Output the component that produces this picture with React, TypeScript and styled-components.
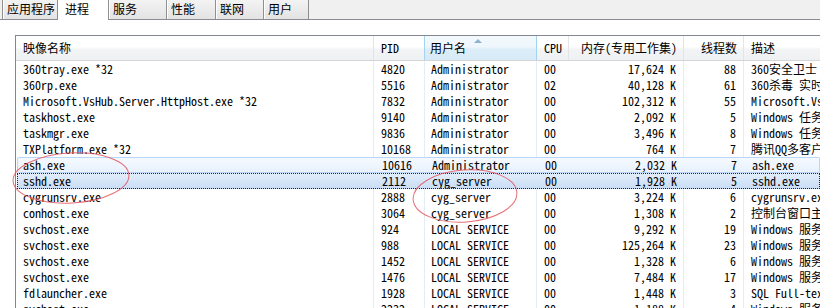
import React from "react";
import styled, { createGlobalStyle, css } from "styled-components";

const GlobalStyle = createGlobalStyle`
  html, body {
    margin: 0;
    padding: 0;
    background: #ffffff;
  }
  body {
    width: 820px;
    height: 308px;
    overflow: hidden;
    font-family: "Noto Sans Mono CJK SC", "Liberation Mono", "Noto Sans CJK SC", monospace;
    font-size: 12px;
    color: #000;
  }
`;

const Page = styled.div`
  position: relative;
  width: 820px;
  height: 308px;
  overflow: hidden;
  background: #ffffff;
`;

const TabBar = styled.div`
  display: flex;
  align-items: flex-end;
  height: 20px;
  padding-left: 2px;
  box-sizing: border-box;
  background: #f0f0f0;
  border-bottom: 1px solid #898c95;
`;

const Tab = styled.div<{ $width: number; $active?: boolean; $overlap?: boolean }>`
  width: ${(p) => p.$width}px;
  height: 19px;
  box-sizing: border-box;
  padding-left: 4px;
  line-height: 18px;
  font-family: "Noto Sans CJK SC", sans-serif;
  font-size: 12px;
  white-space: nowrap;
  margin-left: ${(p) => (p.$overlap ? "-1px" : "0")};
  ${(p) =>
    p.$active
      ? css`
          background: #ffffff;
          height: 20px;
          margin-bottom: -1px;
          padding-left: 7px;
        `
      : css`
          background: linear-gradient(#f3f3f3, #e3e3e3);
          border-left: 1px solid #8e8f8f;
          border-right: 1px solid #8e8f8f;
          box-shadow: inset 1px 0 0 #ffffff;
        `}
`;

const Content = styled.div`
  padding: 15px 0 0 15px;
`;

const List = styled.div`
  border-top: 1px solid #828790;
  border-left: 1px solid #828790;
  height: 300px;
  overflow: hidden;
`;

const COLS = "358px 51px 112px 32px 115px 60px 320px";

const Header = styled.div`
  display: grid;
  grid-template-columns: ${COLS};
  height: 25px;
  box-sizing: border-box;
  border-bottom: 1px solid #d5d5d5;
  background: linear-gradient(#ffffff 0%, #ffffff 45%, #f3f4f6 55%, #eff0f2 100%);
`;

const HeadCell = styled.div<{ $right?: boolean; $sorted?: boolean; $pad?: number }>`
  position: relative;
  line-height: 23px;
  padding: 0 ${(p) => (p.$right ? 6 : 0)}px 0 ${(p) => p.$pad ?? 7}px;
  text-align: ${(p) => (p.$right ? "right" : "left")};
  border-right: 1px solid #e3e4e6;
  white-space: nowrap;
  overflow: hidden;
  ${(p) =>
    p.$sorted &&
    css`
      background: linear-gradient(#f3f9fd 0%, #eef7fc 45%, #dcedf8 55%, #d6eaf7 100%);
      border-left: 1px solid #a4d3ef;
      border-right: 1px solid #a4d3ef;
      margin-left: -1px;
    `}
`;

const SortArrow = styled.span`
  position: absolute;
  top: 3px;
  left: 49px;
  width: 0;
  height: 0;
  border-left: 4px solid transparent;
  border-right: 4px solid transparent;
  border-bottom: 4px solid #8fb3cf;
`;

type RowState = "normal" | "hover" | "selected";

const Row = styled.div<{ $state: RowState }>`
  display: grid;
  grid-template-columns: ${COLS};
  height: 16px;
  line-height: 16px;
  ${(p) =>
    p.$state === "hover" &&
    css`
      margin-left: 1px;
      background: linear-gradient(#f6faff, #e6f0fc);
      box-shadow: inset 0 0 0 1px #b9d7fc;
      border-radius: 2px;
    `}
  ${(p) =>
    p.$state === "selected" &&
    css`
      margin-left: 1px;
      background: linear-gradient(#e2edfa, #c9ddf5);
      outline: 1px dotted #222;
      outline-offset: -1px;
    `}
`;

const Cell = styled.div<{ $right?: boolean; $line?: boolean; $pad?: number; $clear?: boolean }>`
  padding: 0 ${(p) => (p.$right ? 7 : 0)}px 0 ${(p) => p.$pad ?? 7}px;
  text-align: ${(p) => (p.$right ? "right" : "left")};
  white-space: nowrap;
  overflow: hidden;
  border-right: 1px solid ${(p) => (p.$line && !p.$clear ? "#e4ecf5" : "transparent")};
`;

const Annotation = styled.svg`
  position: absolute;
  left: 0;
  top: 0;
  pointer-events: none;
`;

type Proc = {
  name: string;
  pid: string;
  user: string;
  cpu: string;
  mem: string;
  threads: string;
  desc: string;
  state?: RowState;
};

const procs: Proc[] = [
  { name: "360tray.exe *32", pid: "4820", user: "Administrator", cpu: "00", mem: "17,624 K", threads: "88", desc: "360安全卫士 安全防护中心" },
  { name: "360rp.exe", pid: "5516", user: "Administrator", cpu: "02", mem: "40,128 K", threads: "61", desc: "360杀毒 实时监控" },
  { name: "Microsoft.VsHub.Server.HttpHost.exe *32", pid: "7832", user: "Administrator", cpu: "00", mem: "102,312 K", threads: "55", desc: "Microsoft.VsHub.Server.HttpHost" },
  { name: "taskhost.exe", pid: "9140", user: "Administrator", cpu: "00", mem: "2,092 K", threads: "5", desc: "Windows 任务的主机进程" },
  { name: "taskmgr.exe", pid: "9836", user: "Administrator", cpu: "00", mem: "3,496 K", threads: "8", desc: "Windows 任务管理器" },
  { name: "TXPlatform.exe *32", pid: "10168", user: "Administrator", cpu: "00", mem: "764 K", threads: "7", desc: "腾讯QQ多客户端管理服务" },
  { name: "ash.exe", pid: "10616", user: "Administrator", cpu: "00", mem: "2,032 K", threads: "7", desc: "ash.exe", state: "hover" },
  { name: "sshd.exe", pid: "2112", user: "cyg_server", cpu: "00", mem: "1,928 K", threads: "5", desc: "sshd.exe", state: "selected" },
  { name: "cygrunsrv.exe", pid: "2888", user: "cyg_server", cpu: "00", mem: "3,224 K", threads: "6", desc: "cygrunsrv.exe" },
  { name: "conhost.exe", pid: "3064", user: "cyg_server", cpu: "00", mem: "1,308 K", threads: "2", desc: "控制台窗口主机" },
  { name: "svchost.exe", pid: "924", user: "LOCAL SERVICE", cpu: "00", mem: "9,292 K", threads: "19", desc: "Windows 服务主进程" },
  { name: "svchost.exe", pid: "988", user: "LOCAL SERVICE", cpu: "00", mem: "125,264 K", threads: "23", desc: "Windows 服务主进程" },
  { name: "svchost.exe", pid: "1452", user: "LOCAL SERVICE", cpu: "00", mem: "1,328 K", threads: "6", desc: "Windows 服务主进程" },
  { name: "svchost.exe", pid: "1476", user: "LOCAL SERVICE", cpu: "00", mem: "7,484 K", threads: "17", desc: "Windows 服务主进程" },
  { name: "fdlauncher.exe", pid: "1928", user: "LOCAL SERVICE", cpu: "00", mem: "1,448 K", threads: "3", desc: "SQL Full-text Filter Daemon Launcher" },
  { name: "svchost.exe", pid: "2232", user: "LOCAL SERVICE", cpu: "00", mem: "1,188 K", threads: "4", desc: "Windows 服务主进程" },
];

const tabs = [
  { label: "应用程序", width: 56 },
  { label: "进程", width: 50, active: true },
  { label: "服务", width: 59 },
  { label: "性能", width: 50, overlap: true },
  { label: "联网", width: 49, overlap: true },
  { label: "用户", width: 46, overlap: true },
];

export default function App() {
  return (
    <Page>
      <GlobalStyle />
      <TabBar>
        {tabs.map((t) => (
          <Tab key={t.label} $width={t.width} $active={t.active} $overlap={t.overlap}>
            {t.label}
          </Tab>
        ))}
      </TabBar>
      <Content>
        <List>
          <Header>
            <HeadCell>映像名称</HeadCell>
            <HeadCell>PID</HeadCell>
            <HeadCell $sorted $pad={5}>
              <SortArrow />
              用户名
            </HeadCell>
            <HeadCell>CPU</HeadCell>
            <HeadCell $right>内存(专用工作集)</HeadCell>
            <HeadCell $right>线程数</HeadCell>
            <HeadCell>描述</HeadCell>
          </Header>
          {procs.map((p, i) => {
            const state = p.state ?? "normal";
            const clear = state !== "normal";
            return (
              <Row key={i} $state={state}>
                <Cell $line $clear={clear} $pad={state === "normal" ? 7 : 6}>{p.name}</Cell>
                <Cell $line $clear={clear}>{p.pid}</Cell>
                <Cell $line $clear={clear} $pad={6}>{p.user}</Cell>
                <Cell>{p.cpu}</Cell>
                <Cell $right $line $clear={clear}>{p.mem}</Cell>
                <Cell $right $line $clear={clear}>{p.threads}</Cell>
                <Cell>{p.desc}</Cell>
              </Row>
            );
          })}
        </List>
      </Content>
      <Annotation width="820" height="308" viewBox="0 0 820 308">
        <ellipse cx="71" cy="178" rx="58" ry="25" transform="rotate(-3 71 178)" fill="none" stroke="#e4555e" strokeOpacity="0.85" strokeWidth="1" />
        <ellipse cx="465" cy="196" rx="52" ry="26" transform="rotate(-4 465 196)" fill="none" stroke="#e4555e" strokeOpacity="0.85" strokeWidth="1" />
      </Annotation>
    </Page>
  );
}
